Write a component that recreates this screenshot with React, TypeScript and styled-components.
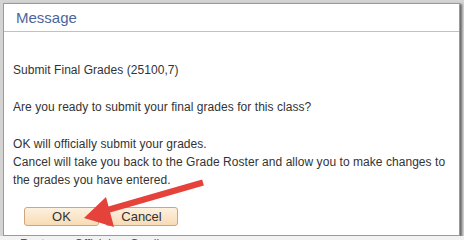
import React from "react"
import styled, { createGlobalStyle } from "styled-components"

const GlobalStyle = createGlobalStyle`
  html, body {
    margin: 0;
    padding: 0;
    background: #d4d4d4;
    font-family: "Liberation Sans", Arial, sans-serif;
  }
  body {
    width: 464px;
    height: 240px;
    overflow: hidden;
  }
`

const Page = styled.div`
  position: relative;
  width: 464px;
  height: 240px;
  display: flex;
  flex-direction: column;
`

const Dialog = styled.section`
  margin: 3px 0 0 3px;
  width: 457px;
  height: 233px;
  flex: none;
  box-sizing: border-box;
  background: #fff;
  border: 1px solid #9a9a9a;
  box-shadow: 2px 1px 2px rgba(60, 60, 60, 0.7);
  display: flex;
  flex-direction: column;
`

const Header = styled.header`
  height: 27px;
  border-bottom: 1px solid #bcc2cc;
  display: flex;
  align-items: center;
  padding-left: 12px;
`

const Title = styled.h1`
  margin: 0;
  font-size: 15px;
  font-weight: normal;
  color: #4b669a;
`

const Body = styled.div`
  padding: 29px 0 0 9px;
  font-size: 12px;
  line-height: 18px;
  color: #333;
  letter-spacing: 0.05px;
`

const Line = styled.p<{ $gap?: boolean }>`
  margin: 0;
  margin-top: ${({ $gap }) => ($gap ? "19px" : "0")};
  white-space: nowrap;
`

const Actions = styled.div`
  display: flex;
  gap: 6px;
  padding: 18px 0 0 20px;
`

const Button = styled.button<{ $width: number }>`
  width: ${({ $width }) => $width}px;
  height: 19px;
  padding: 0;
  box-sizing: border-box;
  border: 1px solid #cfa57c;
  border-radius: 3px;
  background: linear-gradient(#fdf1e0, #f8dbb4);
  font-family: "Liberation Sans", Arial, sans-serif;
  font-size: 13px;
  font-weight: normal;
  color: #333;
`

const Behind = styled.div`
  display: flex;
  gap: 19px;
  padding: 1px 0 0 20px;
  font-size: 12px;
  line-height: 14px;
  color: #555;
  background: #f2f2f2;
  flex: 1;
`

const Pointer = styled.svg`
  position: absolute;
  left: 0;
  top: 0;
  pointer-events: none;
`

export default function App() {
  return (
    <>
      <GlobalStyle />
      <Page>
        <Dialog>
          <Header>
            <Title>Message</Title>
          </Header>
          <Body>
            <Line>Submit Final Grades (25100,7)</Line>
            <Line $gap>Are you ready to submit your final grades for this class?</Line>
            <Line $gap>OK will officially submit your grades.</Line>
            <Line>
              Cancel will take you back to the Grade Roster and allow you to make changes to
            </Line>
            <Line>the grades you have entered.</Line>
          </Body>
          <Actions>
            <Button $width={75}>OK</Button>
            <Button $width={73}>Cancel</Button>
          </Actions>
        </Dialog>
        <Behind>
          <span>Roster</span>
          <span>Official</span>
          <span>Grading</span>
        </Behind>
        <Pointer width="464" height="240" viewBox="0 0 464 240">
          <line
            x1="203"
            y1="182.5"
            x2="104"
            y2="211"
            stroke="#e4423b"
            strokeWidth="6.5"
            strokeLinecap="butt"
          />
          <polygon points="84,218 106,197 114,227" fill="#e4423b" />
        </Pointer>
      </Page>
    </>
  )
}
